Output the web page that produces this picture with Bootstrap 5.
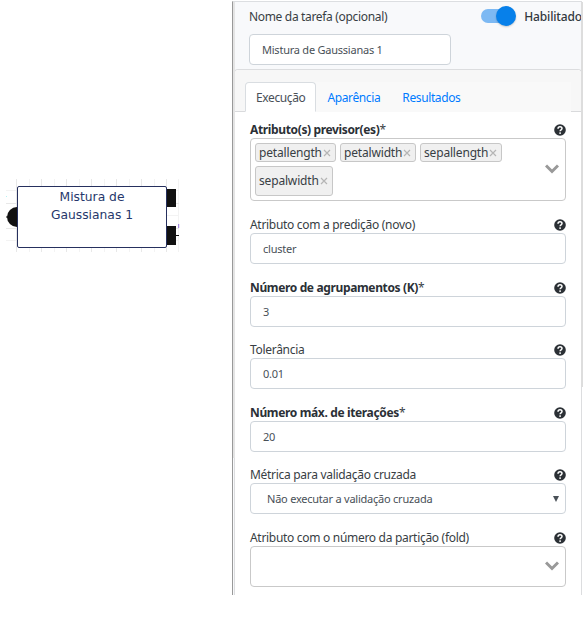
<!DOCTYPE html>
<html lang="pt-BR">
<head>
<meta charset="utf-8">
<title>Mistura de Gaussianas</title>
<link href="https://cdn.jsdelivr.net/npm/bootstrap@5.3.0/dist/css/bootstrap.min.css" rel="stylesheet">
<style>
body{font-family:"Noto Sans","Open Sans",sans-serif;font-size:12px;line-height:16px;color:#383e44;background:#fff;width:584px;height:623px;overflow:hidden}
.canvas-area{width:232px;padding:179px 0 0 6px}
.diagram{position:relative;width:174px;height:73px}
.diagram svg{display:block}
.node-box{position:absolute;left:11px;top:7px;width:150px;height:62px;border:1px solid #26305e;border-radius:2px;background:#fff;color:#26376b;font:12.3px/18px "DejaVu Sans",sans-serif;padding-top:1px}
.side-panel{width:350px;height:594px;margin-top:1px;border-left:1px solid #999;position:relative;background:#f8f9fb;border-top:1px solid #dcdee1;padding-left:1px}
.head{height:67px;padding:7px 0 0 15px}
.head .t1{letter-spacing:-.33px}
.hab{font-weight:500;color:#32383e;letter-spacing:-.15px}
.fld{height:31px;border:1px solid #ced4da;border-radius:4px;background:#fff;font-size:11px;color:#495057;padding:1px 12px 0;display:flex;align-items:center;letter-spacing:-.23px}
.name-fld{width:202px;margin-top:8px}
.switch{width:35px;height:20px;position:relative;margin-right:8px;margin-top:-3px}
.switch i{position:absolute;left:0;top:3px;width:32px;height:14px;border-radius:7px;background:#7db9f3}
.switch b{position:absolute;right:0;top:0;width:20px;height:20px;border-radius:50%;background:#0780ea;box-shadow:0 1px 2px #0003}
.tab-card{border:1px solid #dcdddf;border-bottom:0;border-radius:4px 4px 0 0;height:526px;background:#fff;width:348px}
.tab-head{height:42px;background:#f7f7f7;border-bottom:1px solid #d9dadc;padding:12px 10px 0;border-radius:4px 4px 0 0}
.tab-head .nav{background:#f9f9f9;height:30px;border:0;flex-wrap:nowrap}
.tab-head .nav-link{height:30px;padding:7px 10px;line-height:16px;color:#007bff;border-radius:4px 4px 0 0;margin:0;white-space:nowrap;letter-spacing:-.38px}
.tab-head .nav-link.active{color:#495057;border-color:#d9dde1 #d9dde1 #fff}
.form-zone{padding:9px 15px 0}
.grp{margin-bottom:15.6px}
.grp:first-child{margin-bottom:16px}
.lab{height:16px;line-height:16px;white-space:nowrap;letter-spacing:-.3px}
.lab.tall{height:17px}
.strong-lab{font-weight:700;color:#2b3036;letter-spacing:-.36px}
.multi{border:1px solid #c9c9c9;border-radius:4px;height:63px;padding:4px;position:relative;background:#fff}
.multi.short{height:41px}
.tag{display:inline-flex;align-items:center;height:19px;border:1px solid #c7c7c7;border-radius:3px;background:#f0f0f0;padding:0 4px 0 3px;white-space:nowrap;justify-content:space-between;letter-spacing:-.17px}
.tag.big{height:30px}
.w-81{width:81px}.w-76{width:76px}.w-82{width:82px}.w-78{width:78px}
.chev{position:absolute;right:6px;top:25px}
.short .chev{top:14px}
.bar{position:absolute;right:-1px;top:0;width:2px;height:385px;background:#ddd}
.lbar{position:absolute;left:0;top:0;width:2px;height:456px;background:#e4e4e4}
</style>
<script src="https://cdn.jsdelivr.net/npm/bootstrap@5.3.0/dist/js/bootstrap.bundle.min.js"></script>
</head>
<body>
<svg width="0" height="0" class="position-absolute"><defs>
<symbol id="q" viewBox="0 0 12 12"><circle cx="6" cy="6" r="5.8" fill="#2b3035"/><path d="M4 4.7C4.1 2.3 8 2.2 8 4.5C8 5.9 6.1 5.7 6.1 7.2" fill="none" stroke="#fff" stroke-width="1.5"/><circle cx="6.1" cy="9.1" r=".95" fill="#fff"/></symbol>
<symbol id="x" viewBox="0 0 8 8"><path d="M1 1L7 7M7 1L1 7" stroke="#b5b5b5" stroke-width="1.2"/></symbol>
<symbol id="c" viewBox="0 0 14 10"><path d="M1 1.5L7 7.5L13 1.5" fill="none" stroke="#999" stroke-width="3"/></symbol>
</defs></svg>
<div class="d-flex">
 <div class="canvas-area flex-shrink-0">
  <div class="diagram">
   <svg width="174" height="73">
    <path d="M23.5 0V73M48.5 0V73M73.5 0V73M98.5 0V73M123.5 0V73M148.5 0V73M172.5 0V73M0 11.5H173M0 36.5H173M0 61.5H173" stroke="#f3f3f3"/>
    <path d="M10.5 0V73M35.5 0V73M60.5 0V73M85.5 0V73M110.5 0V73M135.5 0V73M160.5 0V73M0 24.5H173M0 49.5H173" stroke="#e8e8e8"/>
    <circle cx="11" cy="38" r="10" fill="#111"/><path d="M0 37.5h2v1h-2zM161 10h9v18h-9zM161 47h9v19h-9zM169 56h4v1h-4z" fill="#111"/><path d="M172.7 45v4" stroke="#9370db"/><path d="M0 17.5h1" stroke="#b5f3f3"/></svg>
   <div class="node-box text-center">Mistura de<br>Gaussianas 1</div>
  </div>
 </div>
 <div class="side-panel flex-shrink-0">
  <div class="head">
   <div class="d-flex justify-content-between"><span class="t1">Nome da tarefa (opcional)</span>
    <span class="d-flex"><span class="switch"><i></i><b></b></span><span class="hab">Habilitado</span></span></div>
   <div class="fld name-fld">Mistura de Gaussianas 1</div>
  </div>
  <div class="tab-card">
   <div class="tab-head"><div class="nav nav-tabs"><a class="nav-link active">Execução</a><a class="nav-link">Aparência</a><a class="nav-link">Resultados</a></div></div>
   <div class="form-zone">
    <div class="grp"><div class="lab tall d-flex justify-content-between align-items-center"><span><span class="strong-lab">Atributo(s) previsor(es)</span>*</span><svg width="12" height="12"><use href="#q"/></svg></div>
     <div class="multi"><div class="d-flex flex-wrap gap-1"><span class="tag w-81">petallength<svg width="8" height="8"><use href="#x"/></svg></span><span class="tag w-76">petalwidth<svg width="8" height="8"><use href="#x"/></svg></span><span class="tag w-82">sepallength<svg width="8" height="8"><use href="#x"/></svg></span></div><span class="tag big w-78 mt-1">sepalwidth<svg width="8" height="8"><use href="#x"/></svg></span><svg class="chev" width="14" height="10"><use href="#c"/></svg></div></div>
    <div class="grp"><div class="lab d-flex justify-content-between align-items-center"><span>Atributo com a predição (novo)</span><svg width="12" height="12"><use href="#q"/></svg></div><div class="fld">cluster</div></div>
    <div class="grp"><div class="lab d-flex justify-content-between align-items-center"><span><span class="strong-lab">Número de agrupamentos (K)</span>*</span><svg width="12" height="12"><use href="#q"/></svg></div><div class="fld">3</div></div>
    <div class="grp"><div class="lab d-flex justify-content-between align-items-center"><span>Tolerância</span><svg width="12" height="12"><use href="#q"/></svg></div><div class="fld">0.01</div></div>
    <div class="grp"><div class="lab d-flex justify-content-between align-items-center"><span><span class="strong-lab">Número máx. de iterações</span>*</span><svg width="12" height="12"><use href="#q"/></svg></div><div class="fld">20</div></div>
    <div class="grp"><div class="lab d-flex justify-content-between align-items-center"><span>Métrica para validação cruzada</span><svg width="12" height="12"><use href="#q"/></svg></div><div class="fld justify-content-between ps-3 pe-1"><span>Não executar a validação cruzada</span><svg width="10" height="8"><path d="M2 1h6L5 7z" fill="#495057"/></svg></div></div>
    <div class="grp"><div class="lab d-flex justify-content-between align-items-center"><span>Atributo com o número da partição (fold)</span><svg width="12" height="12"><use href="#q"/></svg></div><div class="multi short"><svg class="chev" width="14" height="10"><use href="#c"/></svg></div></div>
   </div>
  </div>
  <div class="bar"></div><div class="lbar"></div>
 </div>
</div>
</body>
</html>
